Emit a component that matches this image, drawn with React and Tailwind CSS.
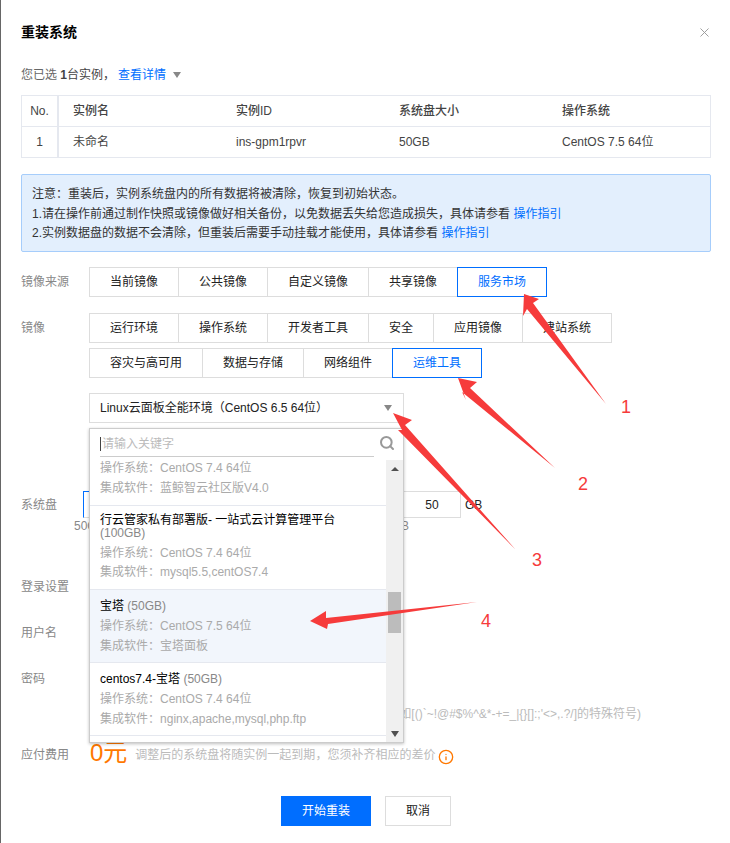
import React from "react";
import { X, Search, Info } from "lucide-react";

const C = "\uFF0C";
const CL = "\uFF1A";
const LP = "\uFF08";
const RP = "\uFF09";

const Tab = ({ children, active }) => (
  <div className={`h-[30px] -ml-px first:ml-0 px-[20px] border flex items-center whitespace-nowrap ${active ? "border-[#006eff] text-[#006eff] relative z-10" : "border-[#dddddd] text-[#222222]"}`}>
    {children}
  </div>
);

const Label = ({ children, w = "w-[68px]" }) => (
  <div className={`${w} shrink-0 text-[#888888]`}>{children}</div>
);

const Caret = ({ color = "border-t-[#888888]", cls = "" }) => (
  <span className={`inline-block w-0 h-0 border-l-[4px] border-r-[4px] border-t-[6px] border-l-transparent border-r-transparent ${color} ${cls}`} />
);

const Item = ({ title, size, os, soft, hover, two }) => (
  <div className={`px-[10px] border-b border-[#e5e8ef] ${hover ? "bg-[#f2f6fc]" : "bg-white"} ${two ? "pt-[8px] pb-[7px]" : "py-[6px]"}`}>
    <div className={two ? "leading-[13px] text-black mb-[3px]" : "leading-[20px] text-black"}>
      {title} <span className="text-[#888888]">{size}</span>
    </div>
    <div className="leading-[20px] text-[#aaaaaa]">操作系统{CL}{os}</div>
    <div className={`${two ? "leading-[19px]" : "leading-[20px]"} text-[#aaaaaa]`}>集成软件{CL}{soft}</div>
  </div>
);

const Cell = ({ children, head, no }) => (
  <div className={`flex items-center ${no ? "justify-center border-r-2 border-[#e5e8ef]" : "pl-[14px]"} ${head && !no ? "font-medium text-[#444444]" : "text-[#444444]"}`}>
    {children}
  </div>
);

export default function App() {
  return (
    <div
      className="relative w-[730px] h-[843px] overflow-hidden bg-white border-l border-[#666666] pl-[20px] pr-[19px] text-[12px] text-[#444444]"
      style={{ fontFamily: '"Liberation Sans", "Noto Sans CJK SC", sans-serif' }}
    >
      <div className="flex items-center justify-between h-[20px] pt-[22px] box-content">
        <div className="text-[14px] font-bold text-black">重装系统</div>
        <X size={15} className="text-[#999999] mr-[-1px]" strokeWidth={1.5} />
      </div>

      <div className="flex items-center h-[20px] mt-[23px] text-[#666666]">
        您已选&nbsp;<span className="font-bold text-[#444444]">1</span><span className="text-[#444444]">台实例{C}</span>
        <span className="text-[#006eff] ml-[3px]">查看详情</span>
        <Caret cls="ml-[7px]" />
      </div>

      <div className="mt-[10px] border border-[#e5e8ef] grid grid-cols-[37px_163px_163px_163px_1fr] grid-rows-[30px_31px]">
        <Cell head no>No.</Cell>
        <Cell head>实例名</Cell>
        <Cell head>实例ID</Cell>
        <Cell head>系统盘大小</Cell>
        <Cell head>操作系统</Cell>
        <div className="col-span-5 grid grid-cols-[37px_163px_163px_163px_1fr] border-t border-[#e5e8ef]">
          <Cell no>1</Cell>
          <Cell>未命名</Cell>
          <Cell>ins-gpm1rpvr</Cell>
          <Cell>50GB</Cell>
          <Cell>CentOS 7.5 64位</Cell>
        </div>
      </div>

      <div className="mt-[16px] h-[78px] bg-[#e3effd] border border-[#a6cdfb] rounded-[2px] px-[10px] pt-[10px] leading-[19.5px] text-[#333333]">
        <div>注意{CL}重装后{C}实例系统盘内的所有数据将被清除{C}恢复到初始状态。</div>
        <div>1.请在操作前通过制作快照或镜像做好相关备份{C}以免数据丢失给您造成损失{C}具体请参看 <span className="text-[#006eff]">操作指引</span></div>
        <div>2.实例数据盘的数据不会清除{C}但重装后需要手动挂载才能使用{C}具体请参看 <span className="text-[#006eff]">操作指引</span></div>
      </div>

      <div className="flex items-center mt-[15px]">
        <Label>镜像来源</Label>
        <div className="flex">
          <Tab>当前镜像</Tab><Tab>公共镜像</Tab><Tab>自定义镜像</Tab><Tab>共享镜像</Tab><Tab active>服务市场</Tab>
        </div>
      </div>

      <div className="flex mt-[16px]">
        <div className="h-[30px] flex items-center"><Label>镜像</Label></div>
        <div className="flex flex-col gap-[5px]">
          <div className="flex">
            <Tab>运行环境</Tab><Tab>操作系统</Tab><Tab>开发者工具</Tab><Tab>安全</Tab><Tab>应用镜像</Tab><Tab>建站系统</Tab>
          </div>
          <div className="flex">
            <Tab>容灾与高可用</Tab><Tab>数据与存储</Tab><Tab>网络组件</Tab><Tab active>运维工具</Tab>
          </div>
        </div>
      </div>

      <div className="mt-[15px] ml-[68px] w-[315px] h-[30px] border border-[#dddddd] flex items-center justify-between pl-[10px] pr-[11px] text-[#222222]">
        <span>Linux云面板全能环境{LP}CentOS 6.5 64位{RP}</span>
        <Caret />
      </div>

      <div className="flex items-center mt-[68px] h-[27px]">
        <Label w="w-[62px]">系统盘</Label>
        <div className="w-[321px] h-full border border-[#dddddd] border-l-[#006eff] border-t-[#006eff]" />
        <div className="w-[58px] h-full border border-[#dddddd] -ml-px flex items-center justify-center text-[#222222]">50</div>
        <div className="ml-[4px] text-[#222222]">GB</div>
      </div>
      <div className="flex justify-between ml-[53px] w-[335px] h-[16px] items-center text-[#888888]">
        <span>50G</span><span>500GB</span>
      </div>

      <div className="mt-[43px] h-[20px] flex items-center"><Label>登录设置</Label></div>
      <div className="mt-[26px] h-[20px] flex items-center"><Label>用户名</Label></div>
      <div className="mt-[26px] h-[20px] flex items-center"><Label>密码</Label></div>
      <div className="mt-[15px] h-[20px] flex items-center justify-end w-[620px] text-[#bbbbbb] whitespace-nowrap">
        如[()`~!@#$%^&*-+=_|{"{}"}[]:;'&lt;&gt;,.?/]的特殊符号)
      </div>
      <div className="mt-[21px] h-[20px] flex items-center">
        <Label w="w-[69px]">应付费用</Label>
        <span className="text-[24px] leading-[20px] text-[#ff7800] -mt-[4px]">0元</span>
        <span className="ml-[8px] text-[#bbbbbb]">调整后的系统盘将随实例一起到期{C}您须补齐相应的差价</span>
        <Info size={16} className="ml-[3px] mt-[3px] text-[#ff7800]" strokeWidth={2} />
      </div>

      <div className="mt-[31px] flex justify-center gap-[14px]">
        <div className="w-[90px] h-[30px] bg-[#006eff] text-white flex items-center justify-center">开始重装</div>
        <div className="w-[66px] h-[30px] border border-[#dddddd] text-[#222222] flex items-center justify-center">取消</div>
      </div>

      {/* dropdown */}
      <div className="absolute left-[88px] top-[428px] w-[315px] h-[315px] bg-white border border-[#cccccc] shadow-[0_1px_3px_rgba(0,0,0,0.25)] flex flex-col z-20">
        <div className="h-[24px] shrink-0 relative flex items-center ml-[10px] mr-[29px] border-b border-[#cccccc] pt-[3px] box-content">
          <span className="w-px h-[14px] bg-[#444444]" />
          <span className="ml-[1px] text-[#bbbbbb]">请输入关键字</span>
        </div>
        <Search size={16} strokeWidth={3} className="absolute right-[8px] top-[6px] text-[#999999]" />
        <div className="flex flex-1 min-h-0 mt-[3px] overflow-hidden">
          <div className="flex-1 min-w-0 overflow-hidden">
            <div className="px-[10px] border-b border-[#e5e8ef] pb-[6px] pt-0 leading-[20px] text-[#aaaaaa] h-[48px]">
              <div className="-mt-[2px]">操作系统{CL}CentOS 7.4 64位</div>
              <div>集成软件{CL}蓝鲸智云社区版V4.0</div>
            </div>
            <Item two title={<>行云管家私有部署版- 一站式云计算管理平台<br /></>} size="(100GB)" os="CentOS 7.4 64位" soft="mysql5.5,centOS7.4" />
            <Item hover title="宝塔" size="(50GB)" os="CentOS 7.5 64位" soft="宝塔面板" />
            <Item title="centos7.4-宝塔" size="(50GB)" os="CentOS 7.4 64位" soft="nginx,apache,mysql,php.ftp" />
          </div>
          <div className="w-[17px] shrink-0 bg-[#f0f0f0] flex flex-col items-center">
            <div className="h-[17px] flex items-center justify-center">
              <span className="w-0 h-0 border-l-[4px] border-r-[4px] border-b-[4px] border-l-transparent border-r-transparent border-b-[#505050]" />
            </div>
            <div className="mt-[115px] w-[13px] h-[41px] bg-[#bcbcbc]" />
            <div className="flex-1" />
            <div className="h-[17px] flex items-center justify-center">
              <Caret color="border-t-[#505050]" />
            </div>
          </div>
        </div>
      </div>

      {/* annotations */}
      <svg className="absolute left-[-1px] top-0 z-30 pointer-events-none" width="730" height="843" viewBox="0 0 730 843">
        <g fill="#f63b3b">
          <polygon points="524,294 539,299 533,303 606,404 527,309 523,316" />
          <polygon points="458,378 477,382 470,388 555,468 462,392 466,400" />
          <polygon points="393,413 412,420 405,425 515,549 398,430 402,430" />
          <polygon points="310,621 326,611 326,618 477,602 328,624 327,629" />
        </g>
      </svg>
      <span className="absolute left-[620px] top-[397px] z-30 text-[18px] leading-[20px] text-[#f63b3b]">1</span>
      <span className="absolute left-[577px] top-[474px] z-30 text-[18px] leading-[20px] text-[#f63b3b]">2</span>
      <span className="absolute left-[531px] top-[550px] z-30 text-[18px] leading-[20px] text-[#f63b3b]">3</span>
      <span className="absolute left-[480px] top-[611px] z-30 text-[18px] leading-[20px] text-[#f63b3b]">4</span>
    </div>
  );
}
